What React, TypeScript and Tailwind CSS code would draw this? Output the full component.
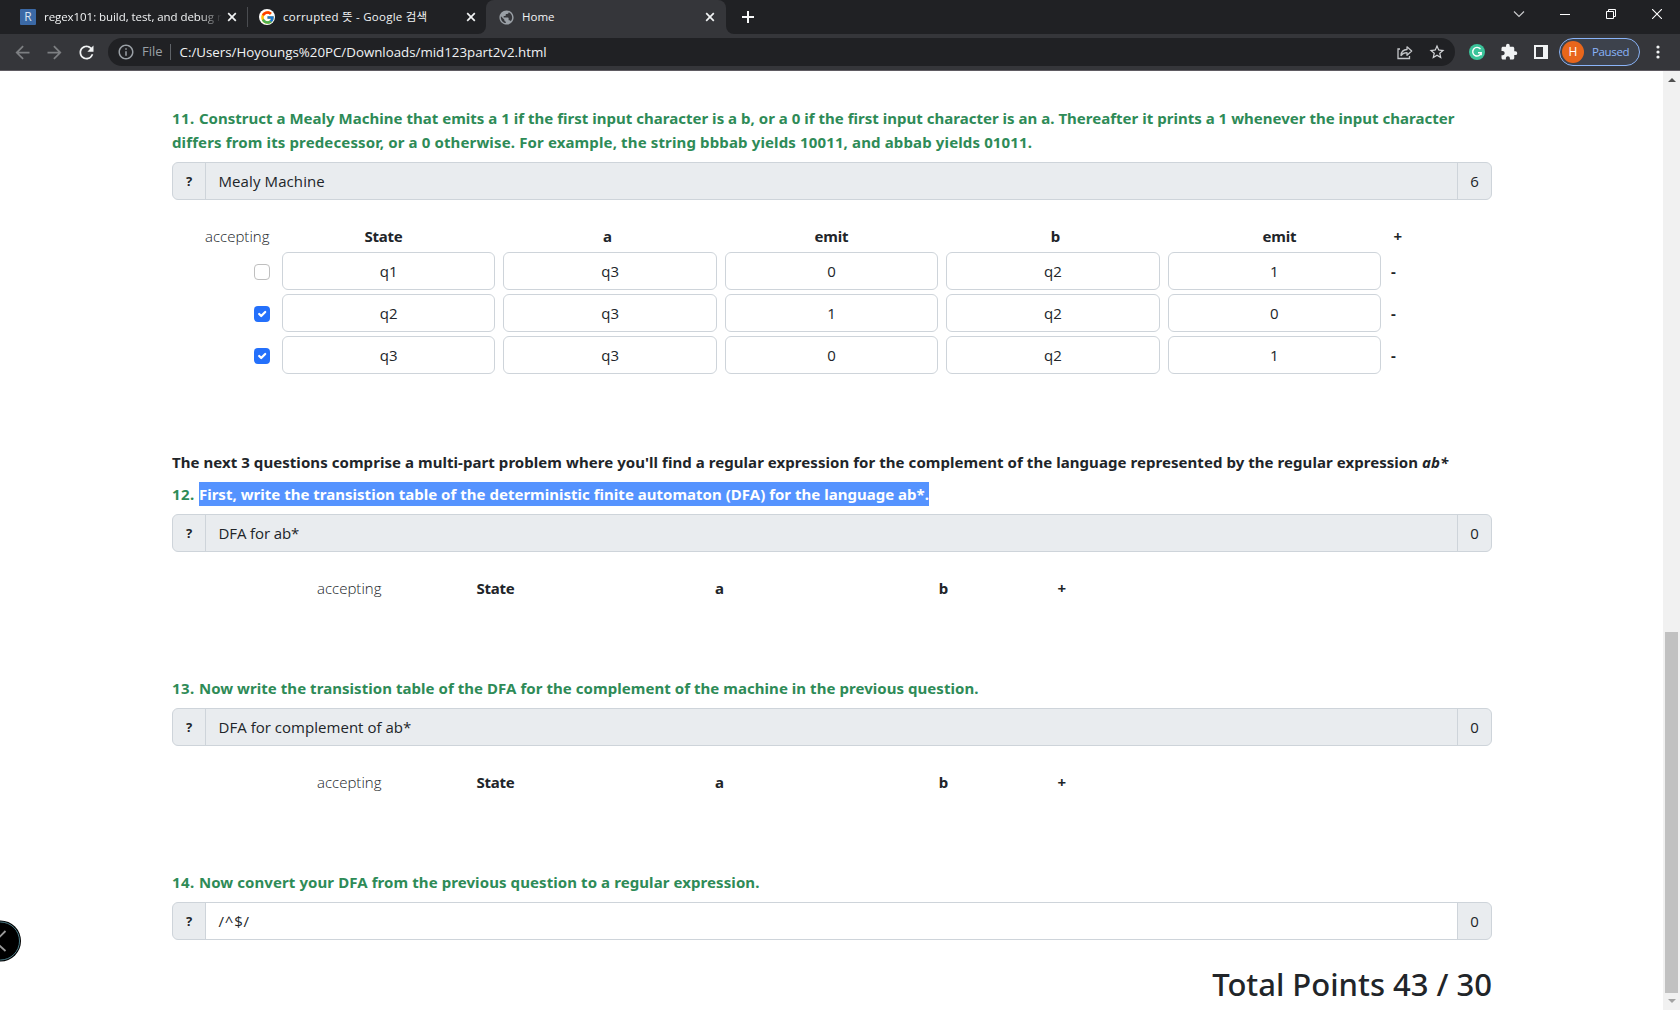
import type { ReactNode } from "react";
import { FcGoogle } from "react-icons/fc";
import {
  MdArrowBack,
  MdArrowForward,
  MdExtension,
  MdInfoOutline,
  MdPublic,
  MdRefresh,
  MdStarBorder,
} from "react-icons/md";

function CloseIcon({ className }: { className?: string }) {
  return (
    <svg className={className} width="10" height="10" viewBox="0 0 10 10" fill="none" stroke="#f1f3f4" strokeWidth="1.7">
      <path d="M1.2 1.2l7.6 7.6M8.8 1.2L1.2 8.8" />
    </svg>
  );
}

function TabStrip() {
  return (
    <div className="flex h-[34px] bg-[#35363a] text-[11.5px] text-[#f1f3f4]">
      <div className="flex w-[486px] items-center rounded-br-lg bg-[#202124]">
        <div className="flex h-full w-[247px] items-center pl-5">
          <span className="flex size-4 items-center justify-center rounded-[1px] bg-[#3b69a6] text-[12px] leading-none text-[#d8e4f2]">
            R
          </span>
          <span className="ml-2 w-[183px] whitespace-nowrap tracking-[-0.06px] [mask-image:linear-gradient(to_right,#000_155px,transparent_178px)]">
            regex101: build, test, and debug r
          </span>
          <CloseIcon />
        </div>
        <span className="h-5 w-px bg-[#4a4c50]" />
        <div className="flex h-full flex-1 items-center pl-[11px]">
          <span className="flex size-4 items-center justify-center rounded-full bg-white">
            <FcGoogle size={15} />
          </span>
          <span className="ml-2 w-[182px] whitespace-nowrap tracking-[0.25px]">corrupted 뜻 - Google 검색</span>
          <CloseIcon className="ml-[1px]" />
        </div>
      </div>
      <div className="w-[240px] bg-[#202124]">
        <div className="flex h-full items-center rounded-t-lg bg-[#35363a] pl-3">
          <MdPublic size={17} className="text-[#9aa0a6]" />
          <span className="ml-[7px] w-[182px]">Home</span>
          <CloseIcon className="ml-[1px]" />
        </div>
      </div>
      <div className="flex flex-1 items-center rounded-bl-lg bg-[#202124] pl-4">
        <svg width="12" height="12" viewBox="0 0 12 12" stroke="#f8f9fa" strokeWidth="2">
          <path d="M6 0v12M0 6h12" />
        </svg>
        <div className="mb-[6px] ml-auto flex items-center pr-[18px]">
          <svg width="12" height="8" viewBox="0 0 12 8" fill="none" stroke="#c8c9cb" strokeWidth="1.2">
            <path d="M1 1.5l5 5 5-5" />
          </svg>
          <svg className="ml-[35px]" width="10" height="10" viewBox="0 0 10 10" stroke="#fff">
            <path d="M0 5.5h10" />
          </svg>
          <svg className="ml-[36px]" width="10" height="10" viewBox="0 0 10 10" fill="none" stroke="#fff">
            <path d="M.5 2.5h7v7h-7zM2.5 2.5v-2h7v7h-2" />
          </svg>
          <svg className="ml-[36px]" width="10" height="10" viewBox="0 0 10 10" stroke="#fff" strokeWidth="1.1">
            <path d="M0 0l10 10M10 0L0 10" />
          </svg>
        </div>
      </div>
    </div>
  );
}

function Toolbar() {
  return (
    <div className="flex h-[37px] items-center border-b border-[#5f5b62] bg-[#35363a]">
      <div className="flex w-[108px] shrink-0 items-center gap-[11px] pl-[12px]">
        <MdArrowBack size={21} className="text-[#7d7f82]" />
        <MdArrowForward size={21} className="text-[#7d7f82]" />
        <MdRefresh size={21} className="text-[#f1f3f4]" />
      </div>
      <div className="flex h-7 w-[1347px] items-center rounded-full bg-[#202124] pl-[9px] pr-[9px]">
        <MdInfoOutline size={18} className="text-[#9aa0a6]" />
        <span className="ml-[7px] text-[13px] text-[#9aa0a6]">File</span>
        <span className="ml-[7px] h-4 w-px bg-[#5f6368]" />
        <span className="ml-[9px] pt-px text-[13.3px] text-[#f1f3f4]">
          C:/Users/Hoyoungs%20PC/Downloads/mid123part2v2.html
        </span>
        <svg className="ml-auto" width="16" height="15" viewBox="0 0 16 15" fill="none" stroke="#c4c6c9" strokeWidth="1.3">
          <path d="M3 4H1v9.500h11.500v-2.500" />
          <path d="M4 10.500c.3-4 2.500-5.900 6-6V1.800l4.700 4.300L10 10.300V7.700c-2.600 0-4.500.7-6 2.800z" strokeLinejoin="round" />
        </svg>
        <MdStarBorder size={18} className="ml-[15px] text-[#d5d7da]" />
      </div>
      <svg className="ml-[14px]" width="16" height="16" viewBox="0 0 16 16" fill="none">
        <circle cx="8" cy="8" r="8" fill="#3bc39a" />
        <path d="M11.500 5.200A4.300 4.300 0 1 0 12.200 8.700H9M12.200 8.500v2.800" stroke="#fff" strokeWidth="1.4" />
      </svg>
      <MdExtension size={18} className="ml-[15px] text-[#f1f3f4]" />
      <span className="ml-[16px] h-[14px] w-[14px] border-2 border-r-[5px] border-[#f1f3f4]" />
      <div className="ml-[11px] flex h-7 w-[81px] items-center rounded-full border border-[#8ab4f8] bg-[#3d424c] pl-[2px]">
        <span className="flex size-[22px] items-center justify-center rounded-full bg-[#e8661b] text-[12px] text-white">
          H
        </span>
        <span className="ml-2 text-[11.5px] tracking-[-0.35px] text-[#8ab4f8]">Paused</span>
      </div>
      <svg className="ml-[16px]" width="4" height="14" viewBox="0 0 4 14" fill="#f1f3f4">
        <circle cx="2" cy="2" r="1.600" />
        <circle cx="2" cy="7" r="1.600" />
        <circle cx="2" cy="12" r="1.600" />
      </svg>
    </div>
  );
}

function Question({ number, className, children }: { number: number; className?: string; children: ReactNode }) {
  return (
    <h2 className={`whitespace-nowrap font-['Noto_Sans'] text-[15px] font-bold leading-6 text-[#2e8b57] ${className ?? ""}`}>
      <span className="tracking-[0.400px]">{number}. </span>
      {children}
    </h2>
  );
}

function AnswerBar({ score, editable, children }: { score: number; editable?: boolean; children: ReactNode }) {
  return (
    <div className="mt-2 flex h-[38px] overflow-hidden rounded-md border border-[#ced4da] bg-[#e9ecef] text-[15px] leading-9">
      <span className="w-[33px] border-r border-[#ced4da] text-center font-['Noto_Sans'] text-[13px] font-bold">?</span>
      <span className={editable ? "flex-1 bg-white pl-[12.500px]" : "flex-1 pl-[12.500px]"}>{children}</span>
      <span className="w-[34px] border-l border-[#ced4da] text-center">{score}</span>
    </div>
  );
}

function TableHeader({ labels, className }: { labels: string[]; className: string }) {
  return (
    <div className={`mt-6 flex h-6 items-center text-[15px] leading-6 ${className}`}>
      <span className="w-16 whitespace-nowrap font-light">accepting</span>
      <span className="w-[2.500px]" />
      {labels.map((label, i) => (
        <span key={i} className="w-56 text-center font-['Noto_Sans'] font-bold tracking-[-0.2px]">
          {label}
        </span>
      ))}
      <span className="ml-[2px] font-['Noto_Sans'] font-bold">+</span>
    </div>
  );
}

const rows = [
  { accepting: false, cells: ["q1", "q3", "0", "q2", "1"] },
  { accepting: true, cells: ["q2", "q3", "1", "q2", "0"] },
  { accepting: true, cells: ["q3", "q3", "0", "q2", "1"] },
];

function Checkbox({ checked }: { checked: boolean }) {
  if (!checked) return <span className="mt-[2px] size-4 rounded-[4px] border border-[#bfbfbf] bg-white" />;
  return (
    <span className="mt-[2px] flex size-4 items-center justify-center rounded-[4px] bg-[#2470fb]">
      <svg width="16" height="16" viewBox="0 0 20 20" fill="none" stroke="#fff" strokeWidth="2.800" strokeLinecap="round" strokeLinejoin="round">
        <path d="M6.500 10l2.500 2.500 5-5" />
      </svg>
    </span>
  );
}

function Scrollbar() {
  return (
    <div className="flex w-[17px] flex-col items-center bg-[#f1f1f1]">
      <svg className="mt-[7px]" width="8" height="4" viewBox="0 0 8 4" fill="#505050">
        <path d="M4 0l4 4H0z" />
      </svg>
      <span className="mt-[550px] h-[361px] w-[13px] bg-[#c1c1c1]" />
      <svg className="mt-[6px]" width="8" height="4" viewBox="0 0 8 4" fill="#a3a3a3">
        <path d="M0 0h8L4 4z" />
      </svg>
    </div>
  );
}

export default function App() {
  return (
    <div className="flex h-[1010px] w-[1680px] flex-col overflow-hidden bg-white font-['Open_Sans','Noto_Sans_CJK_KR',sans-serif] text-[#212529]">
      <TabStrip />
      <Toolbar />
      <div className="relative flex min-h-0 flex-1">
        <main className="ml-[172px] mr-[171px] w-[1320px] pt-[35px]">
          <Question number={11}>
            <span className="tracking-[0.020px]">
              Construct a Mealy Machine that emits a 1 if the first input character is a b, or a 0 if the first input
              character is an a. Thereafter it prints a 1 whenever the input character
            </span>
            <br />
            <span className="tracking-[0.135px]">
              differs from its predecessor, or a 0 otherwise. For example, the string bbbab yields 10011, and abbab yields
              01011.
            </span>
          </Question>
          <AnswerBar score={6}>
            <span className="tracking-[0.1px]">Mealy Machine</span>
          </AnswerBar>

          <TableHeader className="pl-[33px]" labels={["State", "a", "emit", "b", "emit"]} />
          <div className="mt-1 flex flex-col gap-1">
            {rows.map((row, i) => (
              <div key={i} className="flex h-[38px] items-center pl-[82px]">
                <Checkbox checked={row.accepting} />
                <div className="ml-3 flex gap-2">
                  {row.cells.map((cell, j) => (
                    <span
                      key={j}
                      className="h-[38px] w-[213.400px] rounded-md border border-[#ced4da] text-center text-[15px] leading-[36px]"
                    >
                      {cell}
                    </span>
                  ))}
                </div>
                <span className="ml-[10px] font-['Noto_Sans'] text-[15px] font-bold">-</span>
              </div>
            ))}
          </div>

          <p className="mt-[76px] whitespace-nowrap font-['Noto_Sans'] text-[15px] font-bold leading-6 tracking-[0.057px]">
            The next 3 questions comprise a multi-part problem where you'll find a regular expression for the complement of
            the language represented by the regular expression <em>ab*</em>
          </p>
          <Question number={12} className="mt-2">
            <span className="bg-[#5593ff] py-[2px] tracking-[0.016px] text-white">First, write the transistion table of the deterministic finite automaton (DFA) for the language ab*.</span>
          </Question>
          <AnswerBar score={0}>
            <span className="tracking-[-0.1px]">DFA for ab*</span>
          </AnswerBar>
          <TableHeader className="pl-[145px]" labels={["State", "a", "b"]} />

          <Question number={13} className="mt-[76px] tracking-[0.050px]">
            Now write the transistion table of the DFA for the complement of the machine in the previous question.
          </Question>
          <AnswerBar score={0}>
            <span className="tracking-[0.030px]">DFA for complement of ab*</span>
          </AnswerBar>
          <TableHeader className="pl-[145px]" labels={["State", "a", "b"]} />

          <Question number={14} className="mt-[76px] tracking-[0.085px]">
            Now convert your DFA from the previous question to a regular expression.
          </Question>
          <AnswerBar score={0} editable>
            <span className="tracking-[0.800px]">/^$/</span>
          </AnswerBar>
          <p className="mt-[25px] text-right font-['Noto_Sans'] text-[31px] font-medium leading-[38px]">
            Total Points 43 / 30
          </p>
        </main>
        <Scrollbar />
        <svg className="absolute left-0 top-[849px]" width="22" height="42" viewBox="0 0 22 42" fill="none">
          <circle cx="0.500" cy="21" r="20.500" fill="#000" />
          <circle cx="0.500" cy="21" r="19" stroke="#4e7f8b" strokeWidth="1" />
          <path d="M5.500 11L-5 21.500 5.500 31" stroke="#9a9a9a" strokeWidth="1.800" />
        </svg>
      </div>
    </div>
  );
}
